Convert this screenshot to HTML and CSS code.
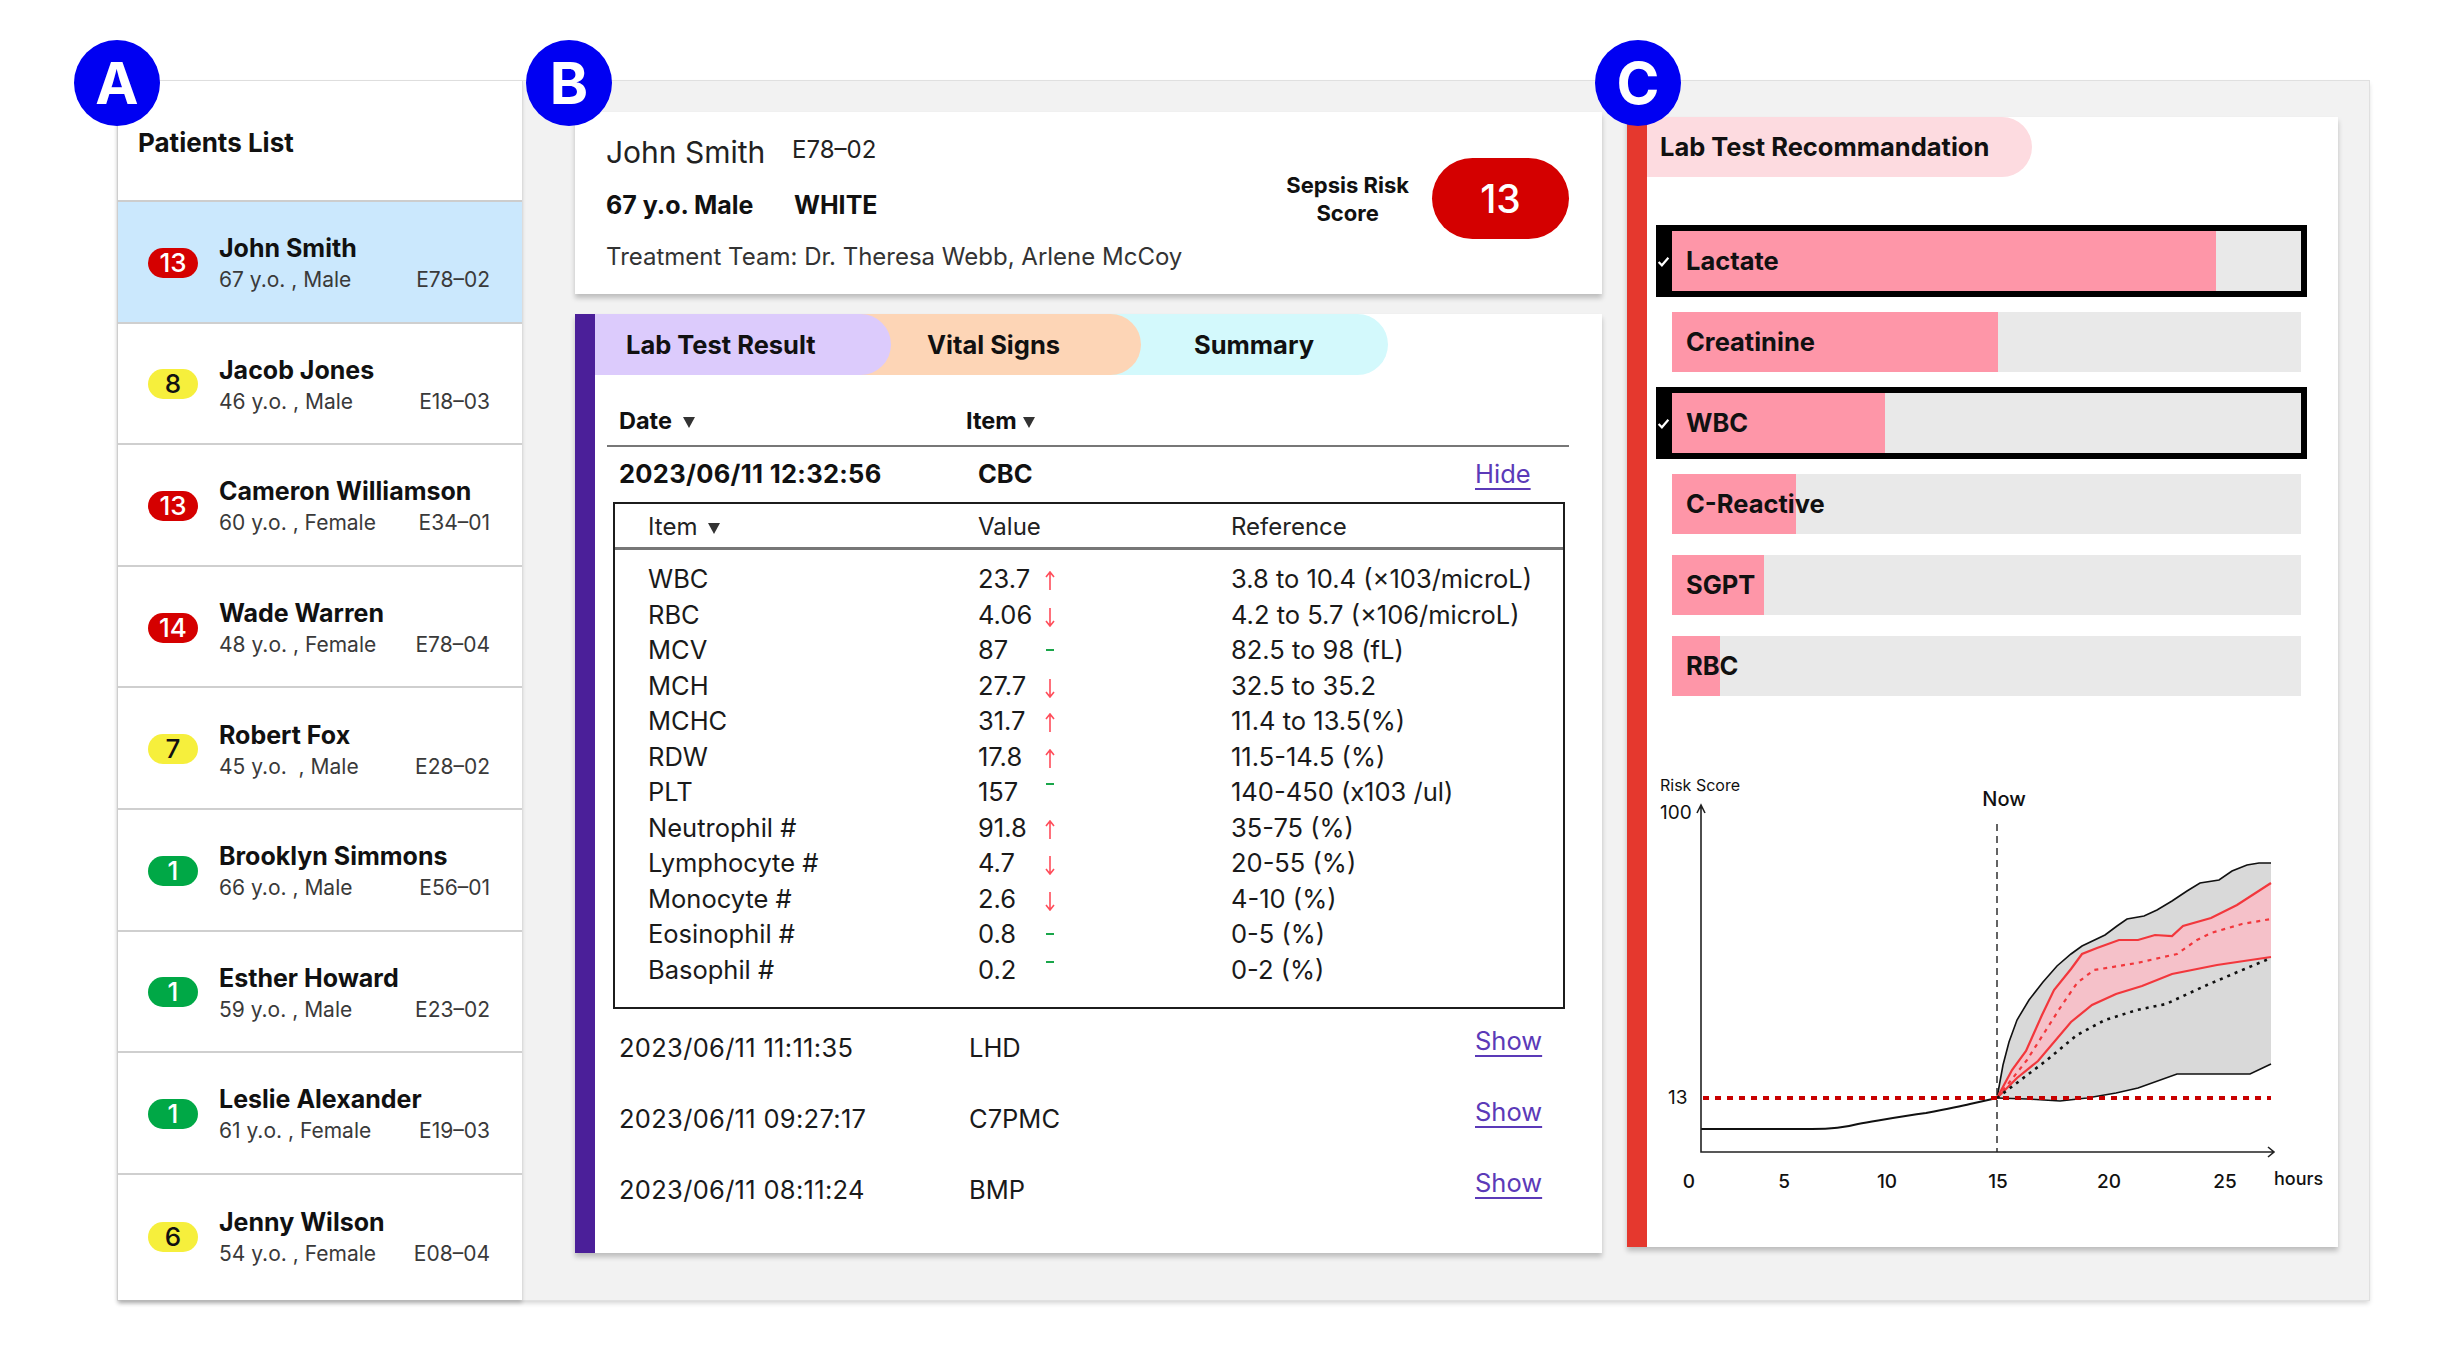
FILE: index.html
```html
<!DOCTYPE html>
<html>
<head>
<meta charset="utf-8">
<title>Sepsis Dashboard</title>
<link rel="stylesheet" href="styles.css">
</head>
<body>
<div class="page">
  <div class="frame">
    <div class="marker m-a">A</div>
    <div class="marker m-b">B</div>
    <div class="marker m-c">C</div>

    <aside class="patients">
      <div class="pl-head">Patients List</div>
      <div class="pl-row selected">
        <span class="badge red">13</span>
        <div class="pl-info"><div class="pl-name">John Smith</div><div class="pl-sub"><span>67 y.o. , Male</span><span>E78–02</span></div></div>
      </div>
      <div class="pl-row">
        <span class="badge yellow">8</span>
        <div class="pl-info"><div class="pl-name">Jacob Jones</div><div class="pl-sub"><span>46 y.o. , Male</span><span>E18–03</span></div></div>
      </div>
      <div class="pl-row">
        <span class="badge red">13</span>
        <div class="pl-info"><div class="pl-name">Cameron Williamson</div><div class="pl-sub"><span>60 y.o. , Female</span><span>E34–01</span></div></div>
      </div>
      <div class="pl-row">
        <span class="badge red">14</span>
        <div class="pl-info"><div class="pl-name">Wade Warren</div><div class="pl-sub"><span>48 y.o. , Female</span><span>E78–04</span></div></div>
      </div>
      <div class="pl-row">
        <span class="badge yellow">7</span>
        <div class="pl-info"><div class="pl-name">Robert Fox</div><div class="pl-sub"><span>45 y.o. &nbsp;, Male</span><span>E28–02</span></div></div>
      </div>
      <div class="pl-row">
        <span class="badge green">1</span>
        <div class="pl-info"><div class="pl-name">Brooklyn Simmons</div><div class="pl-sub"><span>66 y.o. , Male</span><span>E56–01</span></div></div>
      </div>
      <div class="pl-row">
        <span class="badge green">1</span>
        <div class="pl-info"><div class="pl-name">Esther Howard</div><div class="pl-sub"><span>59 y.o. , Male</span><span>E23–02</span></div></div>
      </div>
      <div class="pl-row">
        <span class="badge green">1</span>
        <div class="pl-info"><div class="pl-name">Leslie Alexander</div><div class="pl-sub"><span>61 y.o. , Female</span><span>E19–03</span></div></div>
      </div>
      <div class="pl-row last">
        <span class="badge yellow">6</span>
        <div class="pl-info"><div class="pl-name">Jenny Wilson</div><div class="pl-sub"><span>54 y.o. , Female</span><span>E08–04</span></div></div>
      </div>
    </aside>

    <section class="col-b">
      <div class="pt-card">
        <div class="pt-left">
          <div class="pt-line1"><span class="pt-name">John Smith</span><span class="pt-id">E78–02</span></div>
          <div class="pt-line2"><span class="pt-age">67 y.o. Male</span><span class="pt-race">WHITE</span></div>
          <div class="pt-line3">Treatment Team: Dr. Theresa Webb, Arlene McCoy</div>
        </div>
        <div class="pt-right">
          <div class="risk-label">Sepsis Risk<br>Score</div>
          <div class="risk-pill">13</div>
        </div>
      </div>

      <div class="lab-card">
        <div class="tabs">
          <div class="tab tab-lab">Lab Test Result</div>
          <div class="tab tab-vital">Vital Signs</div>
          <div class="tab tab-sum">Summary</div>
        </div>
        <div class="lab-body">
          <div class="lt-head">
            <span>Date<i class="tri"></i></span>
            <span class="lt-head-item">Item<i class="tri small-gap"></i></span>
          </div>
          <div class="lt-open">
            <span class="lt-date">2023/06/11 12:32:56</span>
            <span class="lt-item">CBC</span>
            <a class="lt-link">Hide</a>
          </div>
          <div class="cbc">
            <div class="cbc-head">
              <span>Item<i class="tri"></i></span>
              <span>Value</span>
              <span></span>
              <span>Reference</span>
            </div>
            <div class="cbc-rows">
              <span>WBC</span><span>23.7</span><span class="up"><svg viewBox="0 0 10 20"><path d="M5 19V1M1 6L5 1L9 6"/></svg></span><span>3.8 to 10.4 (×103/microL)</span>
              <span>RBC</span><span>4.06</span><span class="down"><svg viewBox="0 0 10 20"><path d="M5 1V19M1 14L5 19L9 14"/></svg></span><span>4.2 to 5.7 (×106/microL)</span>
              <span>MCV</span><span>87</span><span class="ok"><i></i></span><span>82.5 to 98 (fL)</span>
              <span>MCH</span><span>27.7</span><span class="down"><svg viewBox="0 0 10 20"><path d="M5 1V19M1 14L5 19L9 14"/></svg></span><span>32.5 to 35.2</span>
              <span>MCHC</span><span>31.7</span><span class="up"><svg viewBox="0 0 10 20"><path d="M5 19V1M1 6L5 1L9 6"/></svg></span><span>11.4 to 13.5(%)</span>
              <span>RDW</span><span>17.8</span><span class="up"><svg viewBox="0 0 10 20"><path d="M5 19V1M1 6L5 1L9 6"/></svg></span><span>11.5-14.5 (%)</span>
              <span>PLT</span><span>157</span><span class="ok high"><i></i></span><span>140-450 (x103 /ul)</span>
              <span>Neutrophil #</span><span>91.8</span><span class="up"><svg viewBox="0 0 10 20"><path d="M5 19V1M1 6L5 1L9 6"/></svg></span><span>35-75 (%)</span>
              <span>Lymphocyte #</span><span>4.7</span><span class="down"><svg viewBox="0 0 10 20"><path d="M5 1V19M1 14L5 19L9 14"/></svg></span><span>20-55 (%)</span>
              <span>Monocyte #</span><span>2.6</span><span class="down"><svg viewBox="0 0 10 20"><path d="M5 1V19M1 14L5 19L9 14"/></svg></span><span>4-10 (%)</span>
              <span>Eosinophil #</span><span>0.8</span><span class="ok"><i></i></span><span>0-5 (%)</span>
              <span>Basophil #</span><span>0.2</span><span class="ok high"><i></i></span><span>0-2 (%)</span>
            </div>
          </div>
          <div class="lt-row">
            <span>2023/06/11 11:11:35</span><span>LHD</span><a class="lt-link show">Show</a>
          </div>
          <div class="lt-row">
            <span>2023/06/11 09:27:17</span><span>C7PMC</span><a class="lt-link show">Show</a>
          </div>
          <div class="lt-row">
            <span>2023/06/11 08:11:24</span><span>BMP</span><a class="lt-link show">Show</a>
          </div>
        </div>
      </div>
    </section>

    <section class="col-c">
      <div class="rec-card">
        <div class="rec-title">Lab Test Recommandation</div>
        <div class="bars">
          <div class="bar sel"><svg class="check" viewBox="0 0 12 12"><path d="M1.5 6.5L4.5 9.5L10.5 2.5"/></svg><div class="fill" style="width:86.5%"></div><span class="bar-label">Lactate</span></div>
          <div class="bar"><div class="fill" style="width:51.9%"></div><span class="bar-label">Creatinine</span></div>
          <div class="bar sel"><svg class="check" viewBox="0 0 12 12"><path d="M1.5 6.5L4.5 9.5L10.5 2.5"/></svg><div class="fill" style="width:33.8%"></div><span class="bar-label">WBC</span></div>
          <div class="bar"><div class="fill" style="width:19.7%"></div><span class="bar-label">C-Reactive</span></div>
          <div class="bar"><div class="fill" style="width:14.6%"></div><span class="bar-label">SGPT</span></div>
          <div class="bar"><div class="fill" style="width:7.6%"></div><span class="bar-label">RBC</span></div>
        </div>
        <svg class="chart" width="690" height="440" viewBox="0 0 690 440">
          <text x="13" y="31" class="t-small">Risk Score</text>
          <text x="13" y="59" class="t-mid">100</text>
          <text x="357" y="46" class="t-now" text-anchor="middle">Now</text>
          <text x="21" y="344" class="t-mid">13</text>
          <polygon class="gray" points="350,338 356,305 362,282 370,260 382,240 396,222 410,206 424,194 435,186 458,175 470,166 480,159 497,156 510,150 525,141 540,131 553,123 572,120 585,111 600,105 612,103 624,103 624,304 603,314 530,314 491,328 469,333 440,338 413,341 380,339"/>
          <polyline class="env" points="350,338 356,305 362,282 370,260 382,240 396,222 410,206 424,194 435,186 458,175 470,166 480,159 497,156 510,150 525,141 540,131 553,123 572,120 585,111 600,105 612,103 624,103"/>
          <polyline class="env" points="350,338 380,339 413,341 440,338 469,333 491,328 530,314 603,314 624,304"/>
          <polygon class="pink" points="350,338 365,310 379,291 395,255 407,230 424,209 435,194 450,188 472,180 491,180 508,175 525,176 536,166 564,158 590,145 624,123 624,197 570,205 525,214 495,226 469,234 445,245 424,262 391,301 370,318"/>
          <polyline class="red" points="350,338 365,310 379,291 395,255 407,230 424,209 435,194 450,188 472,180 491,180 508,175 525,176 536,166 564,158 590,145 624,123"/>
          <polyline class="red" points="350,338 370,318 391,301 424,262 445,245 469,234 495,226 525,214 570,205 624,197"/>
          <polyline class="red-dot" points="350,338 380,300 413,248 430,223 447,210 490,203 530,194 550,180 564,173 595,164 624,159"/>
          <polyline class="black-dot" points="350,338 400,300 430,275 458,260 490,250 519,244 560,225 600,208 624,198"/>
          <path class="hist" d="M54,369 L165,369 C185,369 200,367 211,364 C235,360 255,356 279,353 C300,349 315,346 323,344 L350,338"/>
          <line class="thr" x1="56" y1="338" x2="624" y2="338"/>
          <line class="now" x1="350" y1="64" x2="350" y2="392"/>
          <path class="axis" d="M54,45 V392 H627 M50,53 L54,45 L58,53 M621,387 L627,392 L621,397"/>
          <text x="42" y="428" class="t-x" text-anchor="middle">0</text>
          <text x="137" y="428" class="t-x" text-anchor="middle">5</text>
          <text x="240" y="428" class="t-x" text-anchor="middle">10</text>
          <text x="351" y="428" class="t-x" text-anchor="middle">15</text>
          <text x="462" y="428" class="t-x" text-anchor="middle">20</text>
          <text x="578" y="428" class="t-x" text-anchor="middle">25</text>
          <text x="627" y="425" class="t-hours">hours</text>
        </svg>
      </div>
    </section>
  </div>
</div>
</body>
</html>
```

FILE: styles.css
```css
* { box-sizing: border-box; margin: 0; padding: 0; }
body { margin: 0; background: #fff; font-family: Inter, "Noto Sans", "Liberation Sans", sans-serif; color: #111; }
.page { width: 2457px; height: 1350px; padding: 81px 0 0 118px; }
.frame { position: relative; width: 2251px; height: 1219px; background: #f2f2f2; box-shadow: 0 0 0 1px #e0e0e0, 0 3px 5px rgba(0,0,0,.18); display: flex; }

.marker { position: absolute; top: -41px; width: 86px; height: 86px; border-radius: 50%; background: #0000f2; color: #fff; font-weight: 700; font-size: 58px; display: flex; align-items: center; justify-content: center; z-index: 5; line-height: 1; }
.m-a { left: -44px; }
.m-b { left: 408px; }
.m-c { left: 1477px; }

/* Panel A */
.patients { width: 404px; flex: none; background: #fff; box-shadow: 1px 0 0 #dcdcdc, 0 3px 4px rgba(0,0,0,.2); display: flex; flex-direction: column; }
.pl-head { height: 121px; border-bottom: 2px solid #cdcdcd; padding: 46px 0 0 20px; font-size: 26px; font-weight: 700; line-height: 32px; }
.pl-row { height: 121.6px; flex: none; border-bottom: 2px solid #cfcfcf; display: flex; align-items: center; padding: 0 32px 0 30px; }
.pl-row.last { border-bottom: none; }
.pl-row.selected { background: #cbe8fd; }
.badge { width: 50px; height: 30px; border-radius: 15px; flex: none; display: flex; align-items: center; justify-content: center; font-size: 26px; font-weight: 500; line-height: 30px; margin-right: 21px; margin-top: 2px; }
.badge.red { background: #d50000; color: #fff; }
.badge.yellow { background: #f6ef3c; color: #111; }
.badge.green { background: #00a846; color: #fff; }
.pl-info { flex: 1; padding-top: 5px; }
.pl-name { font-size: 25px; font-weight: 700; line-height: 30px; color: #111; }
.pl-sub { display: flex; justify-content: space-between; font-size: 21px; line-height: 30px; margin-top: 2px; color: #3a3a3a; }

/* Panel B */
.col-b { width: 1080px; flex: none; padding: 31px 0 0 53px; }
.pt-card { width: 1027px; height: 182px; background: #fff; box-shadow: 0 4px 5px rgba(0,0,0,.22); display: flex; justify-content: space-between; align-items: flex-start; padding: 0 33px 0 31px; }
.pt-left { padding-top: 22px; }
.pt-line1 { display: flex; align-items: baseline; line-height: 36px; }
.pt-name { font-size: 30px; width: 186px; color: #222; }
.pt-id { font-size: 24px; position: relative; top: -5px; color: #222; }
.pt-line2 { display: flex; align-items: baseline; line-height: 36px; margin-top: 14px; font-size: 25px; font-weight: 700; }
.pt-age { width: 188px; }
.pt-line3 { line-height: 36px; margin-top: 16px; font-size: 24px; color: #333; }
.pt-right { display: flex; align-items: center; margin-top: 46px; }
.risk-label { font-size: 22px; font-weight: 700; line-height: 28px; text-align: center; margin-right: 23px; }
.risk-pill { width: 137px; height: 81px; border-radius: 41px; background: #d40000; color: #fff; font-size: 39px; font-weight: 500; display: flex; align-items: center; justify-content: center; }

.lab-card { margin-top: 20px; width: 1027px; height: 939px; background: #fff; border-left: 20px solid #4b1f99; box-shadow: 0 4px 5px rgba(0,0,0,.22); }
.tabs { display: flex; height: 61px; }
.tab { height: 61px; line-height: 61px; font-size: 25.5px; font-weight: 700; border-radius: 0 31px 31px 0; color: #111; }
.tab-lab { width: 296px; padding-left: 31px; background: #dccbfc; position: relative; z-index: 3; }
.tab-vital { width: 280px; margin-left: -30px; padding-left: 66px; background: #fdd5b6; position: relative; z-index: 2; }
.tab-sum { width: 277px; margin-left: -30px; padding-left: 83px; background: #d3f9fc; position: relative; z-index: 1; }

.lab-body { padding: 0 33px 0 12px; }
.lt-head { display: flex; padding: 31px 0 9px 12px; border-bottom: 2px solid #777; font-size: 23.5px; font-weight: 700; line-height: 30px; }
.lt-head > span:first-child { width: 347px; }
.tri { display: inline-block; width: 0; height: 0; border-left: 6px solid transparent; border-right: 6px solid transparent; border-top: 11px solid #333; margin-left: 11px; vertical-align: 1px; }
.tri.small-gap { margin-left: 6px; }
.lt-open { display: flex; padding: 12px 0 0 12px; font-size: 25.5px; line-height: 30px; }
.lt-date { width: 359px; font-weight: 700; letter-spacing: 0.3px; }
.lt-item { width: 497px; font-weight: 700; }
.lt-link { color: #5b3ab8; text-decoration: underline; text-decoration-thickness: 2px; text-underline-offset: 5px; letter-spacing: 0; }

.cbc { margin: 13px 4px 0 6px; border: 2px solid #1c1c1c; }
.cbc-head { display: grid; grid-template-columns: 330px 70px 183px 1fr; padding: 8px 0 5px 33px; border-bottom: 3px solid #777; font-size: 24px; line-height: 30px; color: #222; }
.cbc-rows { display: grid; grid-template-columns: 330px 70px 183px 1fr; grid-auto-rows: 35.5px; padding: 11px 0 20px 33px; font-size: 25.5px; line-height: 35.5px; color: #1a1a1a; }
.cbc-rows .up, .cbc-rows .down { margin-left: -3px; }
.cbc-rows .up svg, .cbc-rows .down svg { width: 10px; height: 20px; vertical-align: -3px; fill: none; stroke: #ff4d5a; stroke-width: 1.6; }
.cbc-rows .ok i { display: inline-block; width: 8px; height: 2px; background: #1aa64a; vertical-align: 8px; margin-left: -2px; }
.cbc-rows .ok.high i { vertical-align: 16px; }

.lt-row { display: flex; height: 71px; padding: 20px 0 0 12px; font-size: 25.5px; line-height: 30px; color: #1a1a1a; }
.lt-row > span:first-child { width: 350px; letter-spacing: 0.3px; }
.lt-row > span:nth-child(2) { width: 506px; }
.lt-link.show { margin-top: -7px; }
.cbc + .lt-row { margin-top: 4px; }

/* Panel C */
.col-c { margin-left: 25px; padding-top: 36px; }
.rec-card { width: 711px; height: 1130px; background: #fff; border-left: 20px solid #e5382e; box-shadow: 0 4px 5px rgba(0,0,0,.22); }
.rec-title { width: 385px; height: 60px; line-height: 60px; padding-left: 13px; background: #fddbe0; border-radius: 0 30px 30px 0; font-size: 25.5px; font-weight: 700; }
.bars { display: flex; flex-direction: column; gap: 9px; margin-top: 48px; padding: 0 31px 0 9px; }
.bar { position: relative; height: 72px; border: 6px solid transparent; border-left-width: 16px; background: #e9e9e9; background-clip: padding-box; display: flex; align-items: center; }
.bar.sel { border-color: #000; }
.fill { position: absolute; left: 0; top: 0; bottom: 0; background: #fe96a8; }
.bar-label { position: relative; padding-left: 14px; font-size: 25.5px; font-weight: 700; line-height: 30px; }
.check { position: absolute; left: -15px; top: 50%; width: 13px; height: 13px; margin-top: -6px; fill: none; stroke: #fff; stroke-width: 2; }

.chart { display: block; margin-top: 58px; }
.chart text { font-family: Inter, "Noto Sans", sans-serif; fill: #111; }
.t-small { font-size: 16px; }
.t-mid { font-size: 19px; }
.t-now { font-size: 20px; font-weight: 500; }
.t-x { font-size: 19px; font-weight: 500; }
.t-hours { font-size: 18px; font-weight: 500; }
.gray { fill: #d9d9d9; }
.env { fill: none; stroke: #111; stroke-width: 1.6; }
.pink { fill: #f5c1c9; }
.red { fill: none; stroke: #f2373c; stroke-width: 2.2; }
.red-dot { fill: none; stroke: #f2373c; stroke-width: 2.2; stroke-dasharray: 4 5; }
.black-dot { fill: none; stroke: #111; stroke-width: 2.6; stroke-dasharray: 3 5; }
.hist { fill: none; stroke: #111; stroke-width: 2; }
.thr { stroke: #c80000; stroke-width: 4; stroke-dasharray: 6 6; }
.now { stroke: #222; stroke-width: 1.4; stroke-dasharray: 7 5; }
.axis { fill: none; stroke: #222; stroke-width: 1.6; }
```
